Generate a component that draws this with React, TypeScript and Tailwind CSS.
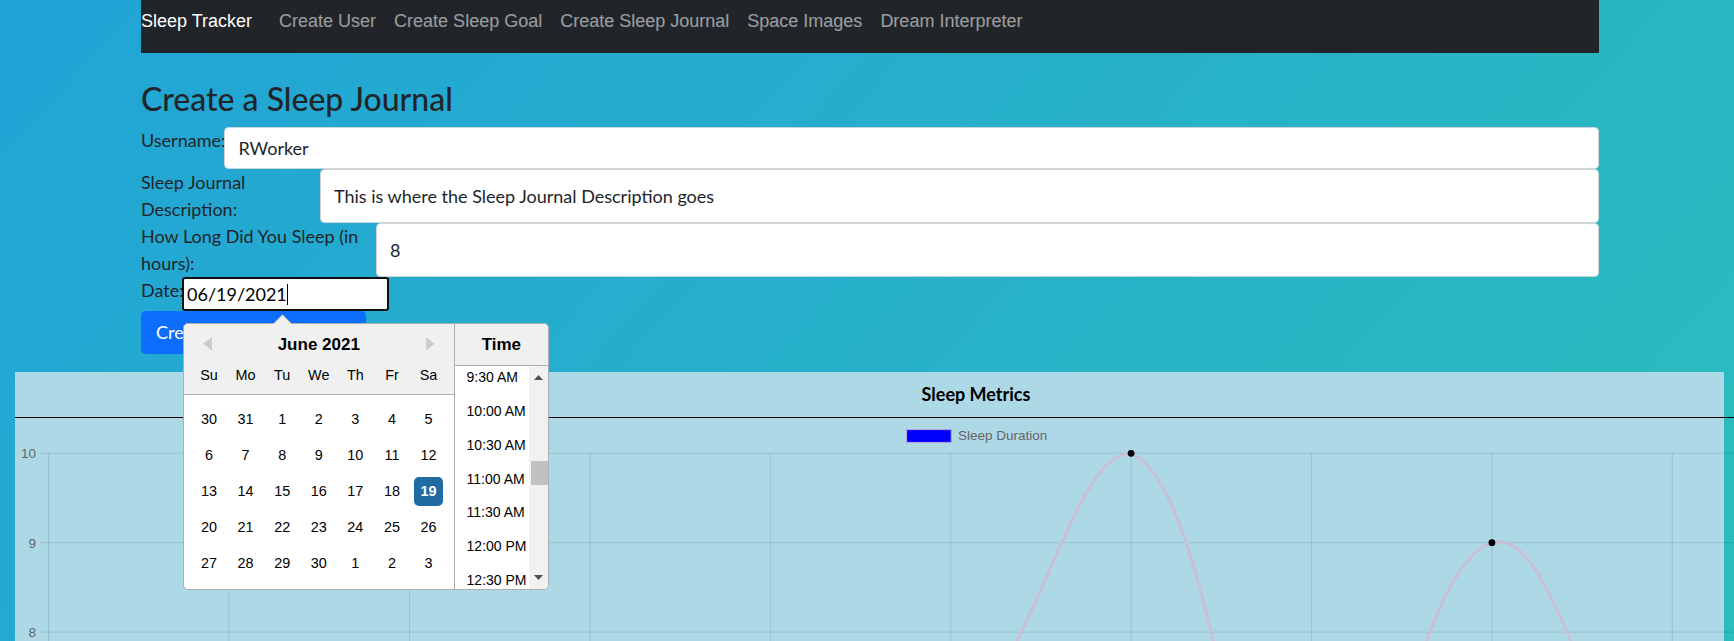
import React from 'react';

type Point = { x: number; y: number };

const NAV_LINKS = ['Create User', 'Create Sleep Goal', 'Create Sleep Journal', 'Space Images', 'Dream Interpreter'];

const DAY_NAMES = ['Su', 'Mo', 'Tu', 'We', 'Th', 'Fr', 'Sa'];

const WEEKS = [
  [30, 31, 1, 2, 3, 4, 5],
  [6, 7, 8, 9, 10, 11, 12],
  [13, 14, 15, 16, 17, 18, 19],
  [20, 21, 22, 23, 24, 25, 26],
  [27, 28, 29, 30, 1, 2, 3],
];

const TIMES = ['9:30 AM', '10:00 AM', '10:30 AM', '11:00 AM', '11:30 AM', '12:00 PM', '12:30 PM'];

// chart geometry (page pixels)
const X0 = 48.7;
const DX = 180.4;
const Y10 = 453.3;
const DY = 89.4;
const SLEEP_HOURS = [6, 7, 6, 7, 6, 6.8, 10, 5, 9, 6.2, 7];

// same spline as chart.js with tension 0.4
const splinePath = (points: Point[], tension = 0.4, top = Y10) => {
  const cps = points.map((p, i) => {
    const prev = points[i - 1] ?? p;
    const next = points[i + 1] ?? p;
    const d01 = Math.hypot(p.x - prev.x, p.y - prev.y);
    const d12 = Math.hypot(next.x - p.x, next.y - p.y);
    const s01 = d01 / (d01 + d12) || 0;
    const s12 = d12 / (d01 + d12) || 0;
    const fa = tension * s01;
    const fb = tension * s12;
    return {
      prev: { x: p.x - fa * (next.x - prev.x), y: Math.max(top, p.y - fa * (next.y - prev.y)) },
      next: { x: p.x + fb * (next.x - prev.x), y: Math.max(top, p.y + fb * (next.y - prev.y)) },
    };
  });
  let d = `M${points[0].x},${points[0].y}`;
  for (let i = 1; i < points.length; i++) {
    const a = cps[i - 1].next;
    const b = cps[i].prev;
    d += ` C${a.x},${a.y} ${b.x},${b.y} ${points[i].x},${points[i].y}`;
  }
  return d;
};

const FormRow = ({ label, labelWidth, value }: { label: string; labelWidth: string; value: string }) => (
  <div className="flex">
    <label className={`${labelWidth} shrink-0 leading-[27px]`}>{label}</label>
    <input
      readOnly
      value={value}
      className="min-w-0 flex-1 rounded-[4.5px] border border-[#ced4da] bg-white px-[13.5px] py-[6.75px] text-[18px] leading-[27px] text-[#212529] outline-none"
    />
  </div>
);

const DatePickerPopup = () => (
  <div className="absolute left-[0.7px] top-[45.5px] z-10">
    <svg className="absolute left-[90px] top-[-9px]" width="19" height="10" viewBox="0 0 19 10">
      <path d="M0.5 10 L9.5 0.8 L18.5 10 Z" fill="#f0f0f0" />
      <path d="M0.5 9.6 L9.5 0.8 L18.5 9.6" fill="none" stroke="#aeaeae" />
    </svg>
    <div className="flex overflow-hidden rounded-[5px] border border-[#aeaeae] bg-white font-['Liberation_Sans',Arial,sans-serif] text-black">
      <div className="w-[270.2px]">
        <div className="border-b border-[#aeaeae] bg-[#f0f0f0]">
          <div className="relative h-[33px] pt-[9px] text-center text-[17px] font-bold leading-[24px]">
            <svg className="absolute left-[19.5px] top-[13.4px]" width="9" height="14" viewBox="0 0 9 14">
              <polygon points="9,0 9,13.4 0,6.7" fill="#cccccc" />
            </svg>
            June 2021
            <svg className="absolute left-[242.3px] top-[13.4px]" width="9" height="14" viewBox="0 0 9 14">
              <polygon points="0,0 0,13.4 8.5,6.7" fill="#cccccc" />
            </svg>
          </div>
          <div className="grid grid-cols-7 px-[7px] py-[3px]">
            {DAY_NAMES.map((d) => (
              <div key={d} className="h-[30.6px] text-center text-[14.4px] leading-[31px]">
                {d}
              </div>
            ))}
          </div>
        </div>
        <div className="grid grid-cols-7 px-[7px] py-[7.3px]">
          {WEEKS.flat().map((day, i) => (
            <div key={i} className="flex h-[36px] items-center justify-center text-[14.4px]">
              {day === 19 && i === 20 ? (
                <span className="flex h-[29px] w-[29.5px] items-center justify-center rounded-[5px] bg-[#216ba5] font-bold text-white">
                  {day}
                </span>
              ) : (
                day
              )}
            </div>
          ))}
        </div>
      </div>
      <div className="flex w-[94px] flex-col border-l border-[#aeaeae]">
        <div className="h-[42.4px] border-b border-[#aeaeae] bg-[#f0f0f0] pt-[9px] text-center text-[17px] font-bold leading-[24px]">
          Time
        </div>
        <div className="flex h-[222.8px]">
          <div className="min-w-0 flex-1 overflow-hidden bg-white">
            <div className="-mt-[5.3px]">
              {TIMES.map((t) => (
                <div key={t} className="flex h-[33.75px] items-center whitespace-nowrap pl-[11.7px] text-[14px]">
                  {t}
                </div>
              ))}
            </div>
          </div>
          <div className="flex w-[19.3px] flex-col bg-[#f1f1f1]">
            <div className="flex h-[22px] items-center justify-center">
              <svg width="9" height="5" viewBox="0 0 9 5">
                <polygon points="0,5 9,5 4.5,0" fill="#505050" />
              </svg>
            </div>
            <div className="ml-[2.3px] mt-[72.3px] h-[24.3px] w-[16.7px] bg-[#c1c1c1]" />
            <div className="flex-1" />
            <div className="flex h-[23px] items-center justify-center">
              <svg width="9" height="5" viewBox="0 0 9 5">
                <polygon points="0,0 9,0 4.5,5" fill="#505050" />
              </svg>
            </div>
          </div>
        </div>
      </div>
    </div>
  </div>
);

const SleepChart = () => {
  const pts: Point[] = SLEEP_HOURS.map((v, i) => ({ x: X0 + i * DX, y: Y10 + (10 - v) * DY }));
  const gridY = [10, 9, 8].map((v) => ({ v, y: Y10 + (10 - v) * DY }));
  return (
    <svg width={1719} height={260} viewBox="15 418 1719 260" className="block" fontFamily="'Liberation Sans', Arial, sans-serif">
      <rect x={906.5} y={429.5} width={44.8} height={13} fill="#0000ff" stroke="#b4a4e2" strokeWidth={1.2} />
      <text x={958} y={440} fontSize={13.5} fill="#666666">
        Sleep Duration
      </text>
      {gridY.map((g) => (
        <line key={g.v} x1={40} x2={1734} y1={g.y} y2={g.y} stroke="rgba(0,0,0,0.1)" strokeWidth={1} />
      ))}
      {pts.map((p, i) => (
        <line key={i} x1={p.x} x2={p.x} y1={Y10} y2={678} stroke={i === 0 ? 'rgba(0,0,0,0.13)' : 'rgba(0,0,0,0.1)'} strokeWidth={1} />
      ))}
      {gridY.map((g) => (
        <text key={g.v} x={36} y={g.y + 4.8} fontSize={13.5} fill="#666666" textAnchor="end">
          {g.v}
        </text>
      ))}
      <path d={splinePath(pts)} fill="none" stroke="#cbbfd6" strokeWidth={3} />
      {pts.map((p, i) => (
        <circle key={i} cx={p.x} cy={p.y} r={3.4} fill="#000000" />
      ))}
    </svg>
  );
};

export default function App() {
  return (
    <div className="h-[641px] w-full overflow-hidden bg-[linear-gradient(132deg,#21a4d7,#2bbdbc)] font-['Lato',sans-serif] text-[18px] text-[#212529]">
      <nav className="ml-[141px] flex h-[53px] w-[1458px] items-start bg-[#212529] pt-[8px] font-['Liberation_Sans',Arial,sans-serif] text-[18px] leading-[27px]">
        <span className="mr-[18px] text-white">Sleep Tracker</span>
        {NAV_LINKS.map((link) => (
          <a key={link} className="px-[9px] text-white/55">
            {link}
          </a>
        ))}
      </nav>

      <main className="ml-[141px] w-[1458px]">
        <h3 className="mb-[9px] mt-[26.6px] text-[32px] font-medium leading-[1.2]">Create a Sleep Journal</h3>
        <FormRow label="Username:" labelWidth="w-[83px]" value="RWorker" />
        <FormRow label="Sleep Journal Description:" labelWidth="w-[178.5px]" value="This is where the Sleep Journal Description goes" />
        <FormRow label="How Long Did You Sleep (in hours):" labelWidth="w-[234.5px]" value="8" />
        <div className="flex">
          <span className="w-[41px] shrink-0 leading-[27px]">Date:</span>
          <div className="relative">
            <div className="flex h-[34px] w-[207px] items-center rounded-[3px] border-2 border-[#101010] bg-white pl-[3px] text-[18px] text-black">
              <span>06/19/2021</span>
              <span className="ml-[0.5px] h-[21px] w-px bg-black" />
            </div>
            <DatePickerPopup />
          </div>
        </div>
        <div>
          <button className="h-[42.75px] w-[225px] rounded-[4.5px] border border-[#0d6efd] bg-[#0d6efd] pl-[14px] text-left text-[18px] leading-[27px] text-white">
            Create Sleep Journal
          </button>
        </div>
      </main>

      <section className="ml-[15px] mt-[18.25px] w-[1709px] bg-[#add8e6]">
        <div className="h-[45px] pl-[213px] pt-[8.5px] text-center text-[18px] font-bold leading-[27px] text-black">Sleep Metrics</div>
        <div className="h-px w-[1719px] bg-black" />
        <SleepChart />
      </section>
    </div>
  );
}
